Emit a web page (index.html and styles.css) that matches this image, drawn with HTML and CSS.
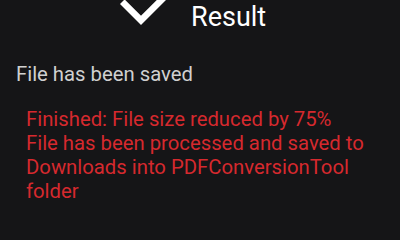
FILE: index.html
```html
<!DOCTYPE html>
<html>
<head>
<meta charset="utf-8">
<link rel="stylesheet" href="styles.css">
</head>
<body>
<div class="screen">
  <div class="header">
    <svg class="check" width="52" height="30" viewBox="0 0 52 30">
      <polyline points="7.3,1.7 26,20.4 51,-4.6" fill="none" stroke="#ffffff" stroke-width="6.5" stroke-linecap="butt" stroke-linejoin="miter"/>
    </svg>
    <div class="title">Result</div>
  </div>
  <div class="status">File has been saved</div>
  <div class="message">Finished: File size reduced by 75%<br>File has been processed and saved to Downloads into PDFConversionTool folder</div>
</div>
</body>
</html>
```
FILE: styles.css
```css
html, body {
  margin: 0;
  padding: 0;
  background: #151517;
}
.screen {
  width: 400px;
  height: 225px;
  overflow: hidden;
  font-family: Roboto, "Noto Sans", sans-serif;
}
.header {
  display: flex;
  align-items: flex-start;
  padding-left: 115px;
  gap: 24px;
}
.check {
  display: block;
  flex: none;
}
.title {
  color: #ffffff;
  font-size: 27px;
  line-height: normal;
  padding-top: 1px;
}
.status {
  color: #d0d0d0;
  font-size: 20.3px;
  line-height: normal;
  margin-top: 28.6px;
  padding-left: 16px;
}
.message {
  color: #d6292e;
  font-size: 20.3px;
  line-height: normal;
  margin-top: 21.2px;
  padding-left: 26px;
  padding-right: 20px;
}
```
